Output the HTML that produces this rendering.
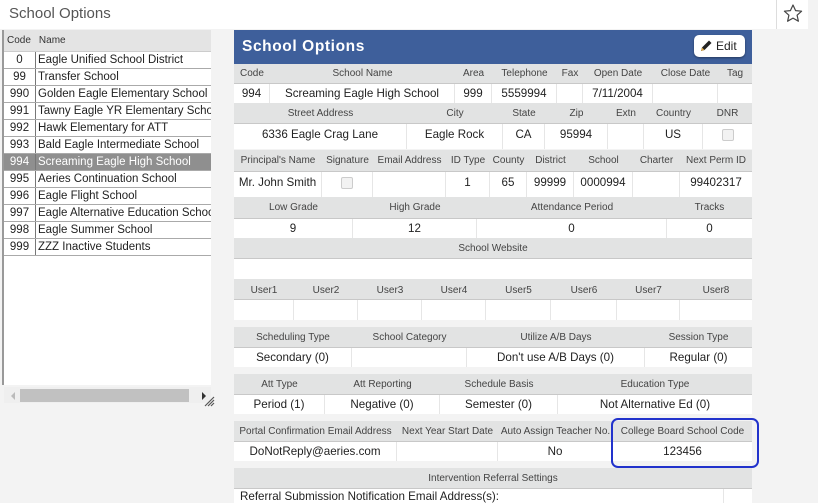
<!DOCTYPE html>
<html><head><meta charset="utf-8"><style>
*{box-sizing:border-box;margin:0;padding:0}
body{width:818px;height:501px;overflow:hidden;background:#f3f3f3;font-family:"Liberation Sans",sans-serif;position:relative;color:#222}
.top{position:absolute;left:0;top:0;width:808px;height:29px;background:#fff}
.top .t{position:absolute;left:9px;top:5px;font-size:15px;color:#555}
.star{position:absolute;left:776px;top:0;width:32px;height:29px;border-left:1px solid #ddd}
.list{position:absolute;left:2px;top:30px;width:209px;height:355px;background:#fff;border-left:2px solid #999}
.lh{height:22px;background:#e4e4e4;font-size:10px;color:#333;line-height:22px;border-bottom:1px solid #ccc}
.lr{height:17px;border-bottom:1px solid #aaa;font-size:11.5px;line-height:16px;display:flex;white-space:nowrap;overflow:hidden}
.lr .c{width:32px;text-align:center;border-right:1px solid #777;flex:none}
.lr .n{padding-left:2px}
.lr.sel{background:#8f8f8f;color:#fff}
.sb{position:absolute;left:4px;top:387px;width:207px;height:16px;background:#efefef}
.panel{position:absolute;left:234px;top:30px;width:518px}
.hd{height:34px;background:#3e5f9b;color:#fff;font-weight:bold;font-size:15.5px;line-height:34px;padding-left:8px;letter-spacing:.6px;position:relative}
.edit{position:absolute;right:7px;top:5px;width:51px;height:22px;background:#fff;border-radius:5px;color:#222;font-weight:normal;font-size:12px;line-height:22px;padding-left:22px;letter-spacing:0;box-shadow:0 1px 2px rgba(0,0,0,.4)}
.row{position:absolute;left:234px;width:518px;display:flex}
.row div{text-align:center;white-space:nowrap;overflow:hidden;flex:none}
.lab{background:#e2e3e3;border-bottom:1px solid #c8c8c8;font-size:10px;color:#444}
.val{background:#fff;font-size:11.6px;color:#222}
.val div{border-right:1px solid #e6e6e6}
.cb{display:inline-block;width:12px;height:12px;border:1px solid #ccc;background:#f2f2f2;border-radius:2px;vertical-align:middle}
.box{position:absolute;left:611px;top:418px;width:148px;height:50px;border:2px solid #2233cc;border-radius:7px}
</style></head><body>
<div class="top"><div class="t">School Options</div>
<div class="star"><svg width="32" height="29" viewBox="0 0 32 29"><path d="M16 5l2.6 5.6 6 .6-4.5 4 1.3 6-5.4-3.1-5.4 3.1 1.3-6-4.5-4 6-.6z" fill="none" stroke="#444" stroke-width="1.2" stroke-linejoin="round"/></svg></div></div>

<div class="list">
<div class="lh"><span style="padding-left:3px">Code</span><span style="padding-left:8px">Name</span></div>
<div class="lr"><div class="c">0</div><div class="n">Eagle Unified School District</div></div>
<div class="lr"><div class="c">99</div><div class="n">Transfer School</div></div>
<div class="lr"><div class="c">990</div><div class="n">Golden Eagle Elementary School</div></div>
<div class="lr"><div class="c">991</div><div class="n">Tawny Eagle YR Elementary School</div></div>
<div class="lr"><div class="c">992</div><div class="n">Hawk Elementary for ATT</div></div>
<div class="lr"><div class="c">993</div><div class="n">Bald Eagle Intermediate School</div></div>
<div class="lr sel"><div class="c">994</div><div class="n">Screaming Eagle High School</div></div>
<div class="lr"><div class="c">995</div><div class="n">Aeries Continuation School</div></div>
<div class="lr"><div class="c">996</div><div class="n">Eagle Flight School</div></div>
<div class="lr"><div class="c">997</div><div class="n">Eagle Alternative Education School</div></div>
<div class="lr"><div class="c">998</div><div class="n">Eagle Summer School</div></div>
<div class="lr"><div class="c">999</div><div class="n">ZZZ Inactive Students</div></div>
</div>
<div class="sb"><div style="position:absolute;left:16px;top:2px;width:169px;height:13px;background:#c1c1c1"></div>
<div style="position:absolute;left:7px;top:5px;border:4px solid transparent;border-right-color:#bbb;border-left:0"></div>
<div style="position:absolute;left:198px;top:5px;border:4px solid transparent;border-left-color:#333;border-right:0"></div></div>
<svg style="position:absolute;left:203px;top:395px" width="12" height="12"><path d="M11 2L2 11M11 5L5 11M11 8L8 11" stroke="#555" stroke-width="1.2"/></svg>

<div class="panel"><div class="hd">School Options<div class="edit"><svg style="position:absolute;left:5px;top:4px" width="14" height="14" viewBox="0 0 14 14"><path d="M2 12l1-3.5 7-7 2.5 2.5-7 7z" fill="#222"/><path d="M2 12l1-3.5 2.5 2.5z" fill="#d9a441"/></svg>Edit</div></div></div>

<div class="row lab" style="top:64px;height:20px;line-height:20px"><div style="width:36px;text-align:left;padding-left:6px">Code</div><div style="width:185px">School Name</div><div style="width:37px">Area</div><div style="width:65px">Telephone</div><div style="width:26px">Fax</div><div style="width:70px">Open Date</div><div style="width:65px">Close Date</div><div style="width:34px">Tag</div></div>
<div class="row val" style="top:84px;height:19px;line-height:19px"><div style="width:36px">994</div><div style="width:185px">Screaming Eagle High School</div><div style="width:37px">999</div><div style="width:65px">5559994</div><div style="width:26px"></div><div style="width:70px">7/11/2004</div><div style="width:65px"></div><div style="width:34px;border:0"></div></div>

<div class="row lab" style="top:103px;height:21px;line-height:21px"><div style="width:173px">Street Address</div><div style="width:96px">City</div><div style="width:42px">State</div><div style="width:63px">Zip</div><div style="width:36px">Extn</div><div style="width:59px">Country</div><div style="width:49px">DNR</div></div>
<div class="row val" style="top:124px;height:25px;line-height:22px"><div style="width:173px">6336 Eagle Crag Lane</div><div style="width:96px">Eagle Rock</div><div style="width:42px">CA</div><div style="width:63px">95994</div><div style="width:36px"></div><div style="width:59px">US</div><div style="width:49px;border:0"><span class="cb"></span></div></div>

<div class="row lab" style="top:150px;height:22px;line-height:22px"><div style="width:88px">Principal's Name</div><div style="width:51px">Signature</div><div style="width:73px">Email Address</div><div style="width:44px">ID Type</div><div style="width:37px">County</div><div style="width:47px">District</div><div style="width:59px">School</div><div style="width:47px">Charter</div><div style="width:72px">Next Perm ID</div></div>
<div class="row val" style="top:172px;height:25px;line-height:22px"><div style="width:88px">Mr. John Smith</div><div style="width:51px"><span class="cb"></span></div><div style="width:73px"></div><div style="width:44px">1</div><div style="width:37px">65</div><div style="width:47px">99999</div><div style="width:59px">0000994</div><div style="width:47px"></div><div style="width:72px;border:0">99402317</div></div>

<div class="row lab" style="top:197px;height:22px;line-height:22px"><div style="width:119px">Low Grade</div><div style="width:124px">High Grade</div><div style="width:190px">Attendance Period</div><div style="width:85px">Tracks</div></div>
<div class="row val" style="top:219px;height:19px;line-height:19px"><div style="width:119px">9</div><div style="width:124px">12</div><div style="width:190px">0</div><div style="width:85px;border:0">0</div></div>

<div class="row lab" style="top:238px;height:21px;line-height:21px"><div style="width:518px">School Website</div></div>
<div class="row val" style="top:259px;height:20px"></div>

<div class="row lab" style="top:279px;height:21px;line-height:23px"><div style="width:60px">User1</div><div style="width:64px">User2</div><div style="width:64px">User3</div><div style="width:64px">User4</div><div style="width:65px">User5</div><div style="width:66px">User6</div><div style="width:63px">User7</div><div style="width:72px">User8</div></div>
<div class="row val" style="top:300px;height:20px"><div style="width:60px"></div><div style="width:64px"></div><div style="width:64px"></div><div style="width:64px"></div><div style="width:65px"></div><div style="width:66px"></div><div style="width:63px"></div><div style="width:72px;border:0"></div></div>

<div class="row lab" style="top:327px;height:21px;line-height:21px"><div style="width:118px">Scheduling Type</div><div style="width:115px">School Category</div><div style="width:178px">Utilize A/B Days</div><div style="width:107px">Session Type</div></div>
<div class="row val" style="top:348px;height:19px;line-height:19px"><div style="width:118px">Secondary (0)</div><div style="width:115px"></div><div style="width:178px">Don't use A/B Days (0)</div><div style="width:107px;border:0">Regular (0)</div></div>

<div class="row lab" style="top:374px;height:21px;line-height:21px"><div style="width:91px">Att Type</div><div style="width:115px">Att Reporting</div><div style="width:118px">Schedule Basis</div><div style="width:194px">Education Type</div></div>
<div class="row val" style="top:395px;height:19px;line-height:19px"><div style="width:91px">Period (1)</div><div style="width:115px">Negative (0)</div><div style="width:118px">Semester (0)</div><div style="width:194px;border:0">Not Alternative Ed (0)</div></div>

<div class="row lab" style="top:421px;height:21px;line-height:21px"><div style="width:163px">Portal Confirmation Email Address</div><div style="width:101px">Next Year Start Date</div><div style="width:115px">Auto Assign Teacher No.</div><div style="width:139px">College Board School Code</div></div>
<div class="row val" style="top:442px;height:19px;line-height:19px"><div style="width:163px">DoNotReply@aeries.com</div><div style="width:101px"></div><div style="width:115px">No</div><div style="width:139px;border:0">123456</div></div>
<div class="box"></div>

<div class="row lab" style="top:468px;height:21px;line-height:21px"><div style="width:518px">Intervention Referral Settings</div></div>
<div class="row val" style="top:489px;height:14px;line-height:16px"><div style="width:490px;text-align:left;padding-left:6px">Referral Submission Notification Email Address(s):</div></div>
</body></html>
